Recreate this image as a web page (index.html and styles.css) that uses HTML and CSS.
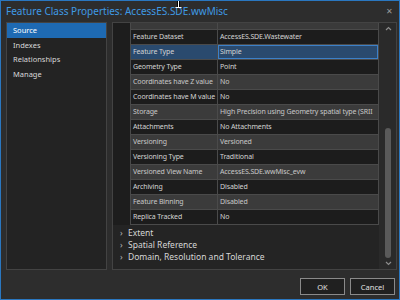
FILE: index.html
```html
<!DOCTYPE html>
<html lang="en">

<head>
    <meta charset="UTF-8">
    <meta name="viewport" content="width=device-width, initial-scale=1.0">
    <title>Feature Class Properties</title>
    <link rel="stylesheet" href="styles.css">
</head>

<body>
    <div class="window">
        <div class="titlebar">
            <span class="title">Feature Class Properties: AccessES.SDE.wwMisc</span>
            <span class="close">&#x2715;</span>
        </div>

        <div class="body">
            <div class="nav">
                <div class="nav-item active">Source</div>
                <div class="nav-item">Indexes</div>
                <div class="nav-item">Relationships</div>
                <div class="nav-item">Manage</div>
            </div>

            <div class="main">
                <div class="scroll-content">
                    <div class="grid">
                        <div class="gutter"></div>
                        <div class="props">
                            <div class="row header"><div class="cell"></div><div class="cell"></div></div>
                            <div class="row dark"><div class="cell">Feature Dataset</div><div class="cell">AccessES.SDE.Wastewater</div></div>
                            <div class="row selected"><div class="cell">Feature Type</div><div class="cell">Simple</div></div>
                            <div class="row dark"><div class="cell">Geometry Type</div><div class="cell">Point</div></div>
                            <div class="row light"><div class="cell">Coordinates have Z value</div><div class="cell">No</div></div>
                            <div class="row dark"><div class="cell">Coordinates have M value</div><div class="cell">No</div></div>
                            <div class="row light"><div class="cell">Storage</div><div class="cell">High Precision using Geometry spatial type (SRII</div></div>
                            <div class="row dark"><div class="cell">Attachments</div><div class="cell">No Attachments</div></div>
                            <div class="row light"><div class="cell">Versioning</div><div class="cell">Versioned</div></div>
                            <div class="row dark"><div class="cell">Versioning Type</div><div class="cell">Traditional</div></div>
                            <div class="row light"><div class="cell">Versioned View Name</div><div class="cell">AccessES.SDE.wwMisc_evw</div></div>
                            <div class="row dark"><div class="cell">Archiving</div><div class="cell">Disabled</div></div>
                            <div class="row light"><div class="cell">Feature Binning</div><div class="cell">Disabled</div></div>
                            <div class="row dark last"><div class="cell">Replica Tracked</div><div class="cell">No</div></div>
                        </div>
                    </div>

                    <div class="sections">
                        <div class="section"><span class="chev">&rsaquo;</span>Extent</div>
                        <div class="section"><span class="chev">&rsaquo;</span>Spatial Reference</div>
                        <div class="section"><span class="chev">&rsaquo;</span>Domain, Resolution and Tolerance</div>
                    </div>
                </div>

                <div class="scrollbar">
                    <svg class="arrow" width="7" height="5" viewBox="0 0 7 5"><path d="M1 4 L3.5 1.5 L6 4" fill="none" stroke="#8c8c8c" stroke-width="1.2"/></svg>
                    <div class="track"><div class="thumb"></div></div>
                    <svg class="arrow" width="7" height="5" viewBox="0 0 7 5"><path d="M1 1 L3.5 3.5 L6 1" fill="none" stroke="#8c8c8c" stroke-width="1.2"/></svg>
                </div>
            </div>
        </div>

        <div class="footer">
            <button class="button">OK</button>
            <button class="button">Cancel</button>
        </div>

        <svg class="cursor" width="7" height="10" viewBox="0 0 7 10">
            <path d="M3.5 0 V8" stroke="#000" stroke-width="3"/>
            <path d="M3.5 0 V8" stroke="#fff" stroke-width="1"/>
            <path d="M0.5 7.5 H6.5" stroke="#fff" stroke-width="1"/>
        </svg>
    </div>
</body>

</html>
```

FILE: styles.css
```css
body {
    margin: 0;
    padding: 0;
    font-family: "Noto Sans", "Open Sans", sans-serif;
    background-color: #2d2d2d;
}

.window {
    position: relative;
    width: 400px;
    height: 300px;
    box-sizing: border-box;
    border: 1px solid #2a77c0;
    background-color: #2d2d2d;
    display: flex;
    flex-direction: column;
    overflow: hidden;
}

.titlebar {
    height: 21px;
    flex: none;
    display: flex;
    align-items: center;
    justify-content: space-between;
    padding: 0 6px 2px 5px;
    box-sizing: border-box;
}

.title {
    color: #3f9ae4;
    font-size: 10px;
}

.close {
    color: #9a9a9a;
    font-size: 8px;
}

.body {
    height: 248px;
    flex: none;
    display: flex;
    gap: 5px;
    padding: 0 2px 0 5px;
}

.nav {
    width: 101px;
    box-sizing: border-box;
    border: 1px solid #434343;
    background-color: #232323;
}

.nav-item {
    height: 14.7px;
    line-height: 14.7px;
    padding-left: 6px;
    font-size: 7.5px;
    color: #d8d8d8;
}

.nav-item.active {
    background-color: #1e6ab3;
    color: #fff;
}

.main {
    width: 285px;
    box-sizing: border-box;
    border: 1px solid #434343;
    background-color: #242424;
    display: flex;
}

.scroll-content {
    flex: 1;
    overflow: hidden;
}

.grid {
    display: flex;
}

.gutter {
    width: 17px;
    background-color: #1d1d1d;
}

.props {
    width: 249px;
    box-sizing: border-box;
    border-left: 1px solid #4a4a4a;
    border-right: 1px solid #4a4a4a;
    border-bottom: 1px solid #4a4a4a;
}

.row {
    display: grid;
    grid-template-columns: 87px 1fr;
    height: 15px;
    box-sizing: border-box;
    border-top: 1px solid #4a4a4a;
    font-size: 7px;
}

.row.header {
    height: 6px;
    border-top: none;
    background-color: #3a3a3a;
}

.cell {
    padding-left: 2px;
    line-height: 14px;
    white-space: nowrap;
    overflow: hidden;
    letter-spacing: -0.12px;
    color: #d4d4d4;
}

.cell:first-child {
    border-right: 1px solid #4a4a4a;
}

.row.dark {
    background-color: #1c1c1c;
}

.row.light {
    background-color: #3b3b3b;
}

.row.light .cell {
    color: #c8c8c8;
}

.row.selected {
    background-color: #2a4a6e;
}

.row.selected .cell:last-child {
    outline: 1px solid #3c80c8;
    outline-offset: -1px;
}

.sections {
    padding: 2px 0 0 7px;
}

.section {
    height: 12px;
    line-height: 12px;
    font-size: 8.5px;
    color: #d6d6d6;
}

.chev {
    display: inline-block;
    width: 8px;
    color: #bbb;
}

.scrollbar {
    width: 17px;
    background-color: #2a2a2a;
    display: flex;
    flex-direction: column;
    align-items: center;
    padding: 3px 0 3px 1px;
    box-sizing: border-box;
}

.arrow {
    flex: none;
}

.track {
    flex: 1;
    width: 100%;
    display: flex;
    justify-content: center;
}

.thumb {
    width: 6px;
    height: 130px;
    margin-top: 97px;
    border-radius: 3px;
    background-color: #5a5a5a;
}

.footer {
    flex: 1;
    display: flex;
    justify-content: flex-end;
    align-items: flex-start;
    gap: 5px;
    padding: 8px 4px 0 0;
}

.button {
    width: 45px;
    height: 17px;
    box-sizing: border-box;
    background-color: #202020;
    border: 1px solid #8a8a8a;
    color: #e0e0e0;
    font-family: "Noto Sans", sans-serif;
    font-size: 7.5px;
    padding: 0;
}

.cursor {
    position: absolute;
    left: 174px;
    top: -1px;
}
```
